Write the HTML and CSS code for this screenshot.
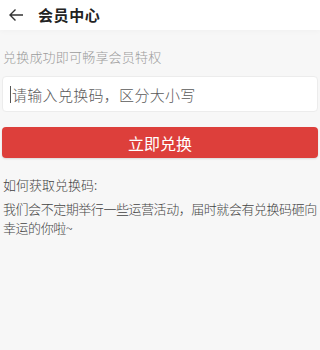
FILE: index.html
```html
<!DOCTYPE html>
<html lang="zh">
<head>
<meta charset="utf-8">
<link rel="stylesheet" href="styles.css">
</head>
<body>
<header class="topbar">
  <svg class="back" width="16" height="14" viewBox="0 0 16 14"><path d="M15 7H2M7.5 1.5L2 7l5.5 5.5" fill="none" stroke="#333" stroke-width="1.4"/></svg>
  <h1 class="title">会员中心</h1>
</header>
<main class="content">
  <p class="hint">兑换成功即可畅享会员特权</p>
  <div class="field"><span class="caret"></span><span class="placeholder">请输入兑换码，区分大小写</span></div>
  <button class="submit">立即兑换</button>
  <p class="how">如何获取兑换码:</p>
  <p class="desc">我们会不定期举行一些运营活动，届时就会有兑换码砸向幸运的你啦~</p>
</main>
</body>
</html>
```
FILE: styles.css
```css
html, body { margin: 0; padding: 0; }
body {
  width: 320px; height: 350px; overflow: hidden;
  background: #f7f7f7;
  font-family: "Noto Sans CJK SC", "Noto Sans", sans-serif;
  color: #444;
}
.topbar {
  height: 30px; background: #fff;
  display: flex; align-items: center;
  padding-left: 8px;
  box-shadow: 0 1px 6px rgba(0,0,0,0.03);
}
.back { margin-right: 14px; margin-top: -1px; }
.title { margin: 0 0 1px; font-size: 15px; font-weight: 700; color: #222; letter-spacing: 0.6px; }
.content { padding: 0 2px; }
.hint {
  margin: 18px 0 0 1px; font-size: 13px; line-height: 18px; color: #9c9c9c; font-weight: 300; letter-spacing: 0.2px;
}
.field {
  margin-top: 10px; height: 34px; background: #fff;
  border: 1px solid #ececec; border-radius: 4px;
  display: flex; align-items: center; padding-left: 7px;
}
.caret { width: 1px; height: 17px; background: #555; margin-right: 1px; }
.placeholder { font-size: 15px; color: #5a5a5a; font-weight: 300; letter-spacing: 0.3px; }
.submit {
  display: block; width: 100%; margin-top: 15px; height: 31px;
  background: #dd3f3b; border: none; border-radius: 4px;
  color: #fff; font-family: inherit; font-size: 16px; font-weight: 400;
  box-shadow: 0 1px 2px rgba(0,0,0,0.12);
}
.how { margin: 17px 0 0 1px; font-size: 13px; line-height: 19px; color: #444; font-weight: 300; }
.desc { margin: 5px -2px 0 1px; font-size: 13px; line-height: 19px; color: #444; font-weight: 300; letter-spacing: -0.45px; }
```
